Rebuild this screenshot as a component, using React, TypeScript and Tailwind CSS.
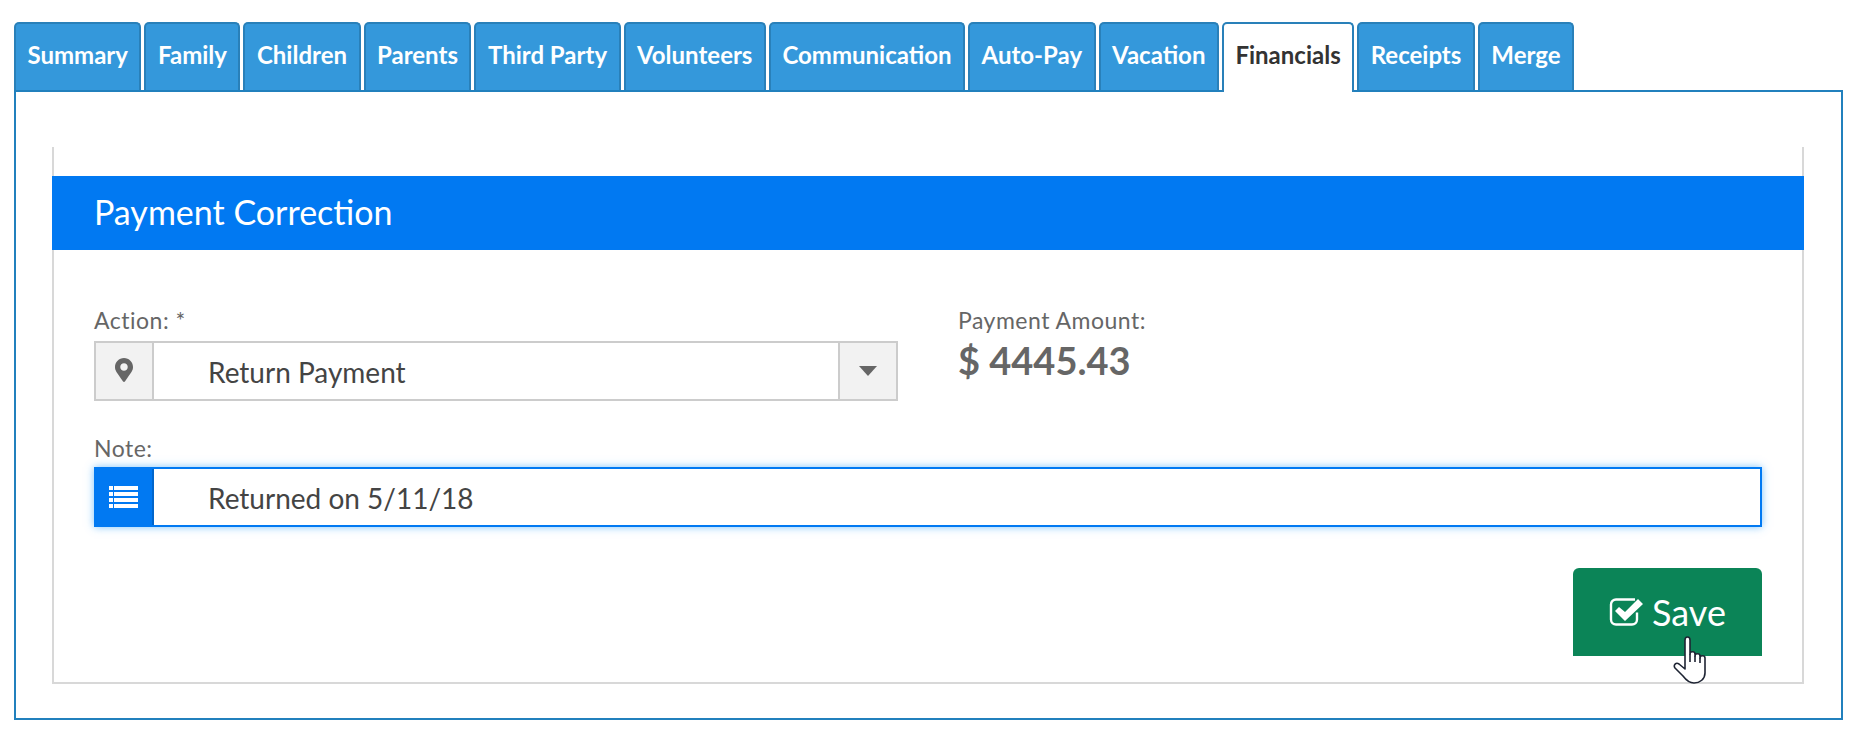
import { FaMapMarkerAlt } from "react-icons/fa";

const tabs = [
  "Summary",
  "Family",
  "Children",
  "Parents",
  "Third Party",
  "Volunteers",
  "Communication",
  "Auto-Pay",
  "Vacation",
  "Financials",
  "Receipts",
  "Merge",
];

const CheckIcon = () => (
  <svg viewBox="0 0 34 30" className="w-[34px] h-[30px]" fill="none">
    <path
      d="M26 2.500H7a5 5 0 0 0-5 5v15a5 5 0 0 0 5 5h16a5 5 0 0 0 5-5v-7"
      stroke="white"
      strokeWidth="2.4"
    />
    <path d="M6 14l4-4 6 5L29 2l5 5-18 17z" fill="white" />
  </svg>
);

const ListIcon = () => (
  <svg viewBox="0 0 29 22" className="w-[29px] h-[22px]" fill="white">
    <rect x="0" y="0" width="4" height="4" />
    <rect x="5" y="0" width="24" height="4" />
    <rect x="0" y="6" width="4" height="4" />
    <rect x="5" y="6" width="24" height="4" />
    <rect x="0" y="12" width="4" height="4" />
    <rect x="5" y="12" width="24" height="4" />
    <rect x="0" y="18" width="4" height="4" />
    <rect x="5" y="18" width="24" height="4" />
  </svg>
);

const HandCursor = () => (
  <svg viewBox="0 0 36 48" className="absolute left-[100px] top-[68px] w-[36px] h-[48px]">
    <path
      d="M12 4c0-4 5-4 5 0v14c0-3 5-3 5 0v2c0-3 5-3 5 0v2c0-3 5-3 5 0v15c0 6-5 10-11 10-5 0-8-3-11-7l-8-8c-2-3 1-6 4-4l6 5z"
      fill="white"
      stroke="#1e2433"
      strokeWidth="1.6"
      strokeLinejoin="round"
    />
    <path d="M17 18v8M22 20v6M27 22v5" stroke="#1e2433" strokeWidth="1.6" />
  </svg>
);

const App = () => {
  return (
    <div className="bg-white w-[1858px] h-[746px] overflow-hidden pt-[22px] pl-[14px] font-['Lato',sans-serif]">
      <div className="flex gap-[3px] relative z-10 -mb-[2px]">
        {tabs.map((tab) => (
          <div
            key={tab}
            className={
              tab === "Financials"
                ? "h-[70px] flex items-center px-[11.5px] pb-[7px] rounded-t-[5px] border-2 border-b-0 border-[#2980b9] bg-white text-[#333333] text-[24px] font-bold"
                : "h-[68px] flex items-center px-[11.5px] pb-[5px] rounded-t-[5px] border-2 border-b-0 border-[#2980b9] bg-[#3498db] text-white text-[24px] font-bold"
            }
          >
            {tab}
          </div>
        ))}
      </div>

      <div className="w-[1829px] h-[630px] border-2 border-[#2180bd] pt-[55px] pl-[36px] pr-[37px]">
        <div className="h-[537px] border-x-2 border-b-2 border-[#d8d8d8] pt-[29px]">
          <div className="h-[74px] -mx-[2px] bg-[#0179f2] flex items-center pl-[42px] pb-[3px] text-white text-[34px]">
            Payment Correction
          </div>

          <div className="pt-[53px] pl-[40px] pr-[40px]">
            <div className="flex">
              <div className="w-[804px]">
                <div className="text-[#666666] text-[23px] leading-[34px] mb-[4px] tracking-[0.5px]">Action: *</div>
                <div className="h-[60px] flex border-2 border-[#cccccc] bg-white">
                  <div className="w-[58px] flex items-center justify-center pb-[2px] bg-[#f2f2f2] border-r-2 border-[#cccccc] text-[#666666] text-[24px]">
                    <FaMapMarkerAlt />
                  </div>
                  <div className="flex-1 flex items-center pl-[54px] pt-[2px] text-[#444444] text-[28px]">
                    Return Payment
                  </div>
                  <div className="w-[58px] flex items-center justify-center bg-[#f2f2f2] border-l-2 border-[#cccccc]">
                    <svg viewBox="0 0 18 10" className="w-[18px] h-[10px]">
                      <polygon points="0,0 18,0 9,10" fill="#666666" />
                    </svg>
                  </div>
                </div>
              </div>
              <div className="ml-[60px] text-[#666666]">
                <div className="text-[23px] leading-[34px] tracking-[0.5px]">Payment Amount:</div>
                <div className="text-[38px] font-bold leading-[42px] mt-[2px]">$ 4445.43</div>
              </div>
            </div>

            <div className="text-[#666666] text-[23px] leading-[34px] mt-[30px] mb-[2px] tracking-[0.5px]">Note:</div>
            <div className="h-[60px] flex border-2 border-[#0179f2] bg-white shadow-[0_0_8px_rgba(70,170,250,0.7)]">
              <div className="w-[58px] flex items-center justify-center pr-[2px] bg-[#0179f2] border-r-2 border-[#0166cc]">
                <ListIcon />
              </div>
              <div className="flex-1 flex items-center pl-[54px] pt-[2px] text-[#444444] text-[28px]">
                Returned on 5/11/18
              </div>
            </div>

            <div className="flex justify-end mt-[41px]">
              <div className="relative w-[189px] h-[88px] rounded-t-[6px] bg-[#0b8457] flex items-center justify-center gap-[9px] text-white text-[36px]">
                <CheckIcon />
                <span>Save</span>
                <HandCursor />
              </div>
            </div>
          </div>
        </div>
      </div>
    </div>
  );
};

export default App;
